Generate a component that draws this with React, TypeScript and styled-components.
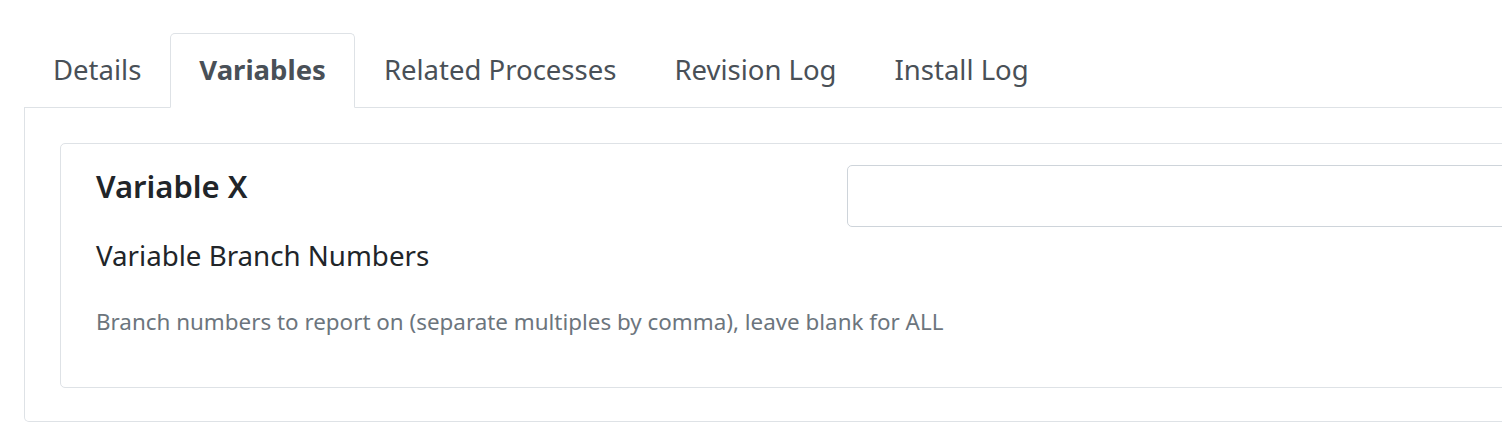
import { createGlobalStyle } from 'styled-components'
import styled from 'styled-components'

const tabs = ['Details', 'Variables', 'Related Processes', 'Revision Log', 'Install Log']

const App = () => {
  return (
    <>
      <GlobalStyle />
      <StyledPage>
        <StyledTabList>
          {tabs.map((tab) => (
            <StyledTab key={tab} $active={tab === 'Variables'}>
              {tab}
            </StyledTab>
          ))}
        </StyledTabList>

        <StyledCard>
          <StyledVariableCard>
            <StyledColumn>
              <StyledHeading>Variable X</StyledHeading>
              <StyledLabel htmlFor="branch-numbers">Variable Branch Numbers</StyledLabel>
            </StyledColumn>
            <StyledColumn>
              <StyledInput id="branch-numbers" type="text" autoComplete="off" />
            </StyledColumn>
            <StyledHelp>
              Branch numbers to report on (separate multiples by comma), leave blank for ALL
            </StyledHelp>
          </StyledVariableCard>
        </StyledCard>
      </StyledPage>
    </>
  )
}

export default App

const GlobalStyle = createGlobalStyle`
  html, body {
    margin: 0;
    background: #fff;
    overflow: hidden;
  }
  body {
    font-family: "Noto Sans", "Open Sans", sans-serif;
    color: #212529;
  }
`

const StyledPage = styled.div`
  width: 1618px;
  padding: 33px 0 0 24px;
`

const StyledTabList = styled.ul`
  display: flex;
  list-style: none;
  margin: 0;
  padding: 0;
  border-bottom: 1px solid #dee2e6;
`

const StyledTab = styled.li<{ $active?: boolean }>`
  margin-bottom: -1px;
  padding: 15px 28px 16px;
  font-size: 27.5px;
  line-height: 42px;
  color: #495057;
  font-weight: ${(p) => (p.$active ? 700 : 400)};
  background: ${(p) => (p.$active ? '#fff' : 'transparent')};
  border: 1px solid ${(p) => (p.$active ? '#dee2e6' : 'transparent')};
  border-bottom-color: ${(p) => (p.$active ? '#fff' : 'transparent')};
  border-radius: 5px 5px 0 0;
  white-space: nowrap;
`

const StyledCard = styled.div`
  padding: 35px 35px 33px;
  border: 1px solid #dee2e6;
  border-top: none;
  border-radius: 0 0 5px 5px;
`

const StyledVariableCard = styled.div`
  display: grid;
  grid-template-columns: 1fr 1fr;
  padding: 21px;
  border: 1px solid #dee2e6;
  border-radius: 5px;
`

const StyledColumn = styled.div`
  display: flex;
  flex-direction: column;
  padding: 0 14px;
`

const StyledHeading = styled.h5`
  margin: 0 0 27px;
  font-size: 31px;
  font-weight: 600;
  line-height: 42px;
  color: #212529;
`

const StyledLabel = styled.label`
  font-size: 27.7px;
  line-height: 42px;
  color: #212529;
`

const StyledHelp = styled.small`
  grid-column: 1 / -1;
  display: block;
  margin: 29px 0 27px;
  padding: 0 14px;
  font-size: 22.4px;
  line-height: 34px;
  color: #6c757d;
  white-space: nowrap;
`

const StyledInput = styled.input`
  box-sizing: border-box;
  width: 100%;
  height: 62px;
  padding: 10px 21px;
  font-family: inherit;
  font-size: 28px;
  color: #495057;
  background: #fff;
  border: 1px solid #ced4da;
  border-radius: 5px;
  outline: none;
`
